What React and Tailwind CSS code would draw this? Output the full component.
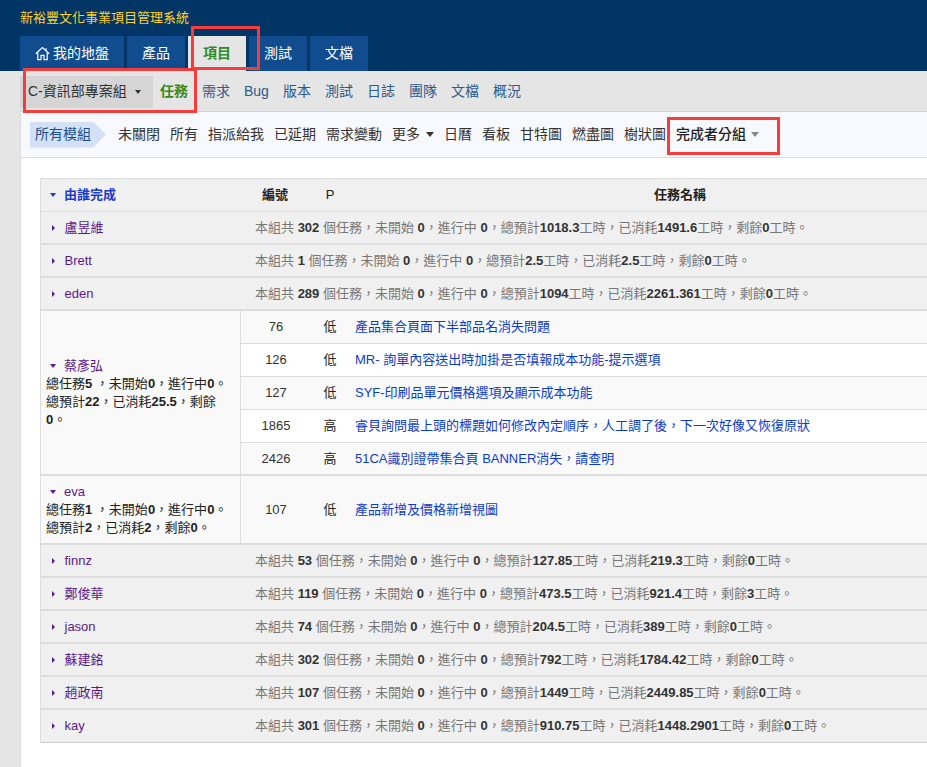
const fontStack = { fontFamily: '"Liberation Sans", "Noto Sans CJK TC", sans-serif' };

const subNav = ["需求", "Bug", "版本", "測試", "日誌", "團隊", "文檔", "概況"];
const viewsA = ["未關閉", "所有", "指派給我", "已延期", "需求變動"];
const viewsB = ["日曆", "看板", "甘特圖", "燃盡圖", "樹狀圖"];

function Caret({ className }) {
  return <span className={"inline-block w-0 h-0 border-x-[3.5px] border-x-transparent border-t-[4px] " + className}></span>;
}

function BigCaret({ className }) {
  return <span className={"inline-block w-0 h-0 border-x-[4px] border-x-transparent border-t-[5px] " + className}></span>;
}

function SideCaret() {
  return <span className="inline-block w-0 h-0 border-y-[3.5px] border-y-transparent border-l-[3.5px] border-l-[#5a1a8b]"></span>;
}

function HomeIcon() {
  return (
    <svg width="15" height="15" viewBox="0 0 15 15" fill="none" stroke="#fff" strokeWidth="1.2" className="mr-[3px]">
      <path d="M0.8 7.8 L7.5 1.6 L14.2 7.8" />
      <path d="M2.8 6.6 V13.6 H6 V9.4 H9 V13.6 H12.2 V6.6" />
      <path d="M11 2.2 V4.4" />
    </svg>
  );
}

function SummaryRow({ name, total, est, used, left, last }) {
  return (
    <div className={"flex h-[33px] items-center bg-[#f0f0f0] " + (last ? "border-b border-b-[#ccc]" : "border-b-2 border-b-[#ddd]")}>
      <div className="w-[214px] flex items-center pl-[10.5px] shrink-0">
        <SideCaret />
        <a className="ml-[10px] text-[#5a1a8b]">{name}</a>
      </div>
      <div className="text-[#777] whitespace-nowrap">
        本組共 <b className="text-[#333]">{total}</b> 個任務，未開始 <b className="text-[#333]">0</b>，進行中 <b className="text-[#333]">0</b>，總預計<b className="text-[#333]">{est}</b>工時，已消耗<b className="text-[#333]">{used}</b>工時，剩餘<b className="text-[#333]">{left}</b>工時。
      </div>
    </div>
  );
}

function TaskRow({ id, pri, title, odd, border }) {
  return (
    <div className={"flex items-center " + (odd ? "bg-[#f9f9f9] " : "bg-white ") + (border ? "h-[33px] border-b border-b-[#ddd]" : "h-[31px]")}>
      <div className="w-[70px] text-center text-[#333] shrink-0">{id}</div>
      <div className="w-[38px] text-center text-[#222] shrink-0">{pri}</div>
      <a className="pl-[6px] text-[#0b3ccc] whitespace-nowrap">{title}</a>
    </div>
  );
}

function Owner({ name, total, est, used, left }) {
  return (
    <div className="w-[200px] shrink-0 bg-[#f9f9f9] border-r border-r-[#ddd] flex flex-col justify-center pl-[5px] pr-[4px] leading-[18px] text-[#222]">
      <div className="flex items-center pl-[4px]">
        <Caret className="border-t-[#5a1a8b]" />
        <a className="ml-[8px] text-[#5a1a8b]">{name}</a>
      </div>
      <div>
        總任務<b>{total}</b> ，未開始<b>0</b>，進行中<b>0</b>。總預計<b>{est}</b>，已消耗<b>{used}</b>，剩餘<b>{left}</b>。
      </div>
    </div>
  );
}

export default function App() {
  return (
    <div className="relative w-[927px] h-[767px] overflow-hidden bg-[#e5e5e5] text-[13px]" style={fontStack}>
      <header className="bg-[#003566] h-[71px]">
        <div className="h-[36px] pl-5 flex items-center text-[#ffd21f]">新裕豐文化事業項目管理系統</div>
        <nav className="flex gap-[3px] pl-5 h-[35px] text-[14px] text-white">
          <a className="flex items-center px-[15px] bg-[#114d8e]"><HomeIcon />我的地盤</a>
          <a className="flex items-center px-[15px] bg-[#114d8e]">產品</a>
          <a className="flex items-center px-[15px] bg-[#e5e5e5] text-[#2f8a1f] font-bold">項目</a>
          <a className="flex items-center px-[15px] bg-[#114d8e]">測試</a>
          <a className="flex items-center px-[15px] bg-[#114d8e]">文檔</a>
        </nav>
      </header>

      <div className="ml-5 h-[41px] flex items-center border-b border-b-[#d0d0d0] text-[14px] text-[#2c5a8e]">
        <div className="w-[133px] h-[32px] bg-[#d5d5d5] flex items-center pl-2 text-[#333] mt-[1px]">
          C-資訊部專案組
          <Caret className="ml-2 border-t-[#333]" />
        </div>
        <div className="flex gap-[14px] ml-[7px]">
          <a className="text-[#3a8a1a] font-bold">任務</a>
          {subNav.map((item) => <a key={item}>{item}</a>)}
        </div>
      </div>

      <div className="ml-5 h-[46px] flex items-center bg-[#f8f9fe] border-b border-b-[#ddd] border-l border-l-[#ddd] text-[14px] text-[#333] pl-[9px]">
        <div className="w-[76px] h-[26px] flex items-center pl-[5px] bg-[#d3e0f5] text-[#17508f] [clip-path:polygon(0_0,83%_0,100%_50%,83%_100%,0_100%)] mr-3">所有模組</div>
        <div className="flex gap-[10px] items-center whitespace-nowrap">
          {viewsA.map((item) => <a key={item}>{item}</a>)}
          <a className="flex items-center">更多<BigCaret className="ml-[6px] border-t-[#333]" /></a>
          {viewsB.map((item) => <a key={item}>{item}</a>)}
          <a className="flex items-center font-medium text-[#222]">完成者分組<BigCaret className="ml-[5px] border-t-[#888]" /></a>
        </div>
      </div>

      <main className="ml-5 h-[610px] bg-white border-l border-l-[#ddd] pl-[19px] pt-[20px]">
        <div className="w-[1000px] border-l border-l-[#ddd] border-t border-t-[#ddd]">
          <div className="flex items-center h-[33px] bg-[#f0f0f0] border-b border-b-[#ddd] font-bold text-[#222]">
            <div className="w-[200px] shrink-0 flex items-center pl-[9px]">
              <Caret className="border-t-[#1a3ccc]" />
              <a className="ml-[8px] text-[#1a3ccc]">由誰完成</a>
            </div>
            <div className="w-[68px] text-center shrink-0">編號</div>
            <div className="w-[42px] text-center shrink-0 font-normal">P</div>
            <div className="w-[658px] text-center shrink-0">任務名稱</div>
          </div>

          <SummaryRow name="盧昱維" total="302" est="1018.3" used="1491.6" left="0" />
          <SummaryRow name="Brett" total="1" est="2.5" used="2.5" left="0" />
          <SummaryRow name="eden" total="289" est="1094" used="2261.361" left="0" />

          <div className="flex border-b-2 border-b-[#ddd]">
            <Owner name="蔡彥弘" total="5" est="22" used="25.5" left="0" />
            <div className="flex-1">
              <TaskRow id="76" pri="低" title="產品集合頁面下半部品名消失問題" odd border />
              <TaskRow id="126" pri="低" title="MR- 詢單內容送出時加掛是否填報成本功能-提示選項" border />
              <TaskRow id="127" pri="低" title="SYF-印刷品單元價格選項及顯示成本功能" odd border />
              <TaskRow id="1865" pri="高" title="睿貝詢問最上頭的標題如何修改內定順序，人工調了後，下一次好像又恢復原狀" border />
              <TaskRow id="2426" pri="高" title="51CA識別證帶集合頁 BANNER消失，請查明" odd />
            </div>
          </div>

          <div className="flex h-[69px] border-b-2 border-b-[#ddd]">
            <Owner name="eva" total="1" est="2" used="2" left="0" />
            <div className="flex-1 flex items-center bg-[#f9f9f9]">
              <div className="w-[70px] text-center text-[#333] shrink-0">107</div>
              <div className="w-[38px] text-center text-[#222] shrink-0">低</div>
              <a className="pl-[6px] text-[#0b3ccc] whitespace-nowrap">產品新增及價格新增視圖</a>
            </div>
          </div>

          <SummaryRow name="finnz" total="53" est="127.85" used="219.3" left="0" />
          <SummaryRow name="鄭俊華" total="119" est="473.5" used="921.4" left="3" />
          <SummaryRow name="jason" total="74" est="204.5" used="389" left="0" />
          <SummaryRow name="蘇建銘" total="302" est="792" used="1784.42" left="0" />
          <SummaryRow name="趙政南" total="107" est="1449" used="2449.85" left="0" />
          <SummaryRow name="kay" total="301" est="910.75" used="1448.2901" left="0" last />
        </div>
      </main>

      {/* red annotation boxes drawn over the screenshot */}
      <div className="absolute left-[191px] top-[26px] w-[69px] h-[44px] border-[3px] border-[#f53d3d]"></div>
      <div className="absolute left-[23px] top-[68px] w-[174px] h-[45px] border-[3px] border-[#f53d3d]"></div>
      <div className="absolute left-[667px] top-[117px] w-[113px] h-[38px] border-[3px] border-[#f53d3d]"></div>
    </div>
  );
}
